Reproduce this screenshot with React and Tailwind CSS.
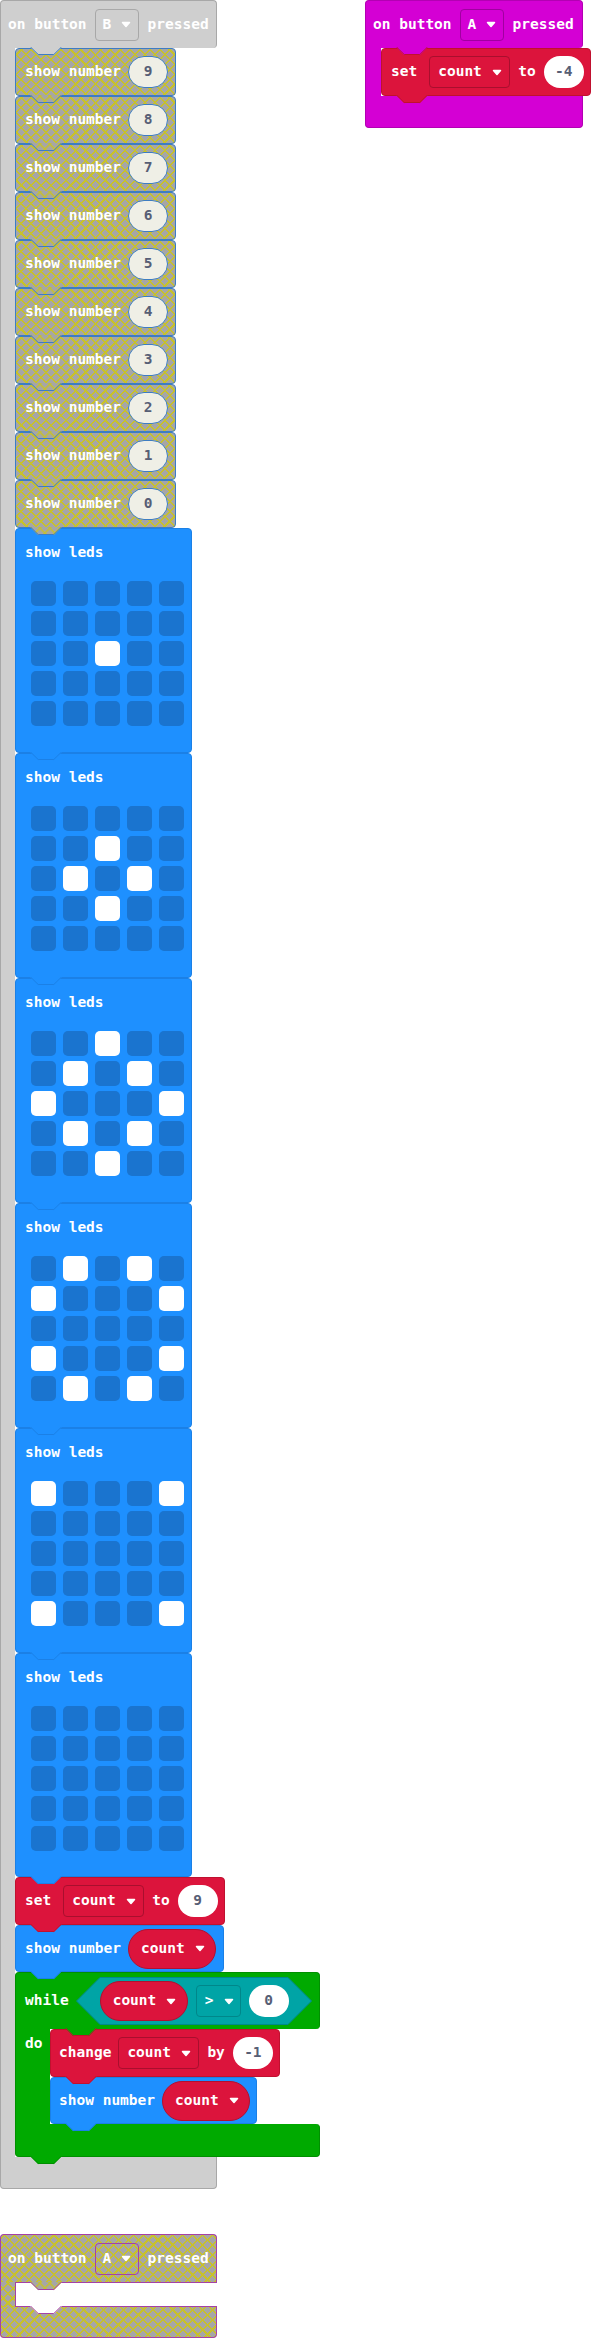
import React from "react";

const FONT = "font-['DejaVu_Sans_Mono',monospace]";
const HATCH =
  "bg-[#a6a6a6] bg-[image:repeating-linear-gradient(45deg,#c7c12c_0_1.5px,transparent_1.5px_7px),repeating-linear-gradient(-45deg,#c7c12c_0_1.5px,transparent_1.5px_7px)]";

const PATTERNS = [
  [12],
  [7, 11, 13, 17],
  [2, 6, 8, 10, 14, 16, 18, 22],
  [1, 3, 5, 9, 15, 19, 21, 23],
  [0, 4, 20, 24],
  [],
];

function Arrow() {
  return (
    <svg width="10" height="7" viewBox="0 0 10 7" className="shrink-0">
      <path d="M1.5 1.5 H8.5 L5 5.5 Z" fill="#fff" stroke="#fff" strokeWidth="1.5" strokeLinejoin="round" />
    </svg>
  );
}

function Tab({ fill, stroke, className = "" }) {
  return (
    <svg width="33" height="9" viewBox="0 0 33 9" className={`absolute z-10 pointer-events-none ${className}`}>
      <path d="M0 0 L8 8 L24 8 L32 0 Z" fill={fill} />
      <path d="M0.5 0 L8.2 7.5 L23.8 7.5 L31.5 0" fill="none" stroke={stroke} strokeWidth="1" />
    </svg>
  );
}

function WhiteOval({ children, className = "" }) {
  return (
    <div className={`w-[40px] h-[32px] shrink-0 rounded-full bg-white flex items-center justify-center text-[#575e75] ${className}`}>
      {children}
    </div>
  );
}

function VarDropdown({ className = "" }) {
  return (
    <div className={`w-[81px] h-[32px] shrink-0 rounded-[4px] border border-[#a90f2e] flex items-center pl-[8px] gap-[10px] ${className}`}>
      <span>count</span>
      <Arrow />
    </div>
  );
}

function CountPill({ className = "" }) {
  return (
    <div className={`w-[88px] h-[40px] shrink-0 rounded-full border border-[#b3102f] bg-[#dc143c] flex items-center pl-[12px] gap-[10px] ${className}`}>
      <span>count</span>
      <Arrow />
    </div>
  );
}

function ShowNumberHatched({ n }) {
  return (
    <div className={`relative w-[161px] h-[48px] shrink-0 rounded-[4px] border border-[#3d7dc3] flex items-center pl-[9px] ${HATCH}`}>
      <span>show number</span>
      <div className="ml-auto mr-[7px] w-[40px] h-[32px] rounded-full border border-[#3d7dc3] bg-[#efefe6] flex items-center justify-center text-[#575e75]">
        {n}
      </div>
      <Tab fill="url(#hatch)" stroke="#3d7dc3" className="left-[14px] top-full" />
    </div>
  );
}

function ShowLeds({ on, last }) {
  const cells = Array.from({ length: 25 }, (_, i) => on.includes(i));
  return (
    <div
      className={
        last
          ? "relative w-[177px] h-[224px] shrink-0 rounded-[4px] border border-[#1b80e6] bg-[#1e90ff]"
          : "relative w-[177px] h-[225px] shrink-0 rounded-[4px] border border-[#1b80e6] bg-[#1e90ff]"
      }
    >
      <div className="h-[48px] flex items-center pl-[9px]">show leds</div>
      <div className="ml-[15px] mt-[4px] grid grid-cols-[repeat(5,25px)] gap-x-[7px] gap-y-[5px]">
        {cells.map((v, i) => (
          <div
            key={i}
            className={v ? "h-[25px] rounded-[5px] bg-white" : "h-[25px] rounded-[5px] bg-[#1a74cf]"}
          />
        ))}
      </div>
      <Tab fill="#1e90ff" stroke="#1b80e6" className="left-[14px] top-full" />
    </div>
  );
}

function SetBlock({ value }) {
  return (
    <div className="relative w-[210px] h-[48px] shrink-0 rounded-[4px] border border-[#c0112f] bg-[#dc143c] flex items-center pl-[9px]">
      <span>set</span>
      <VarDropdown className="ml-[12px]" />
      <span className="ml-[8px]">to</span>
      <WhiteOval className="ml-[8px]">{value}</WhiteOval>
      <Tab fill="#dc143c" stroke="#c0112f" className="left-[14px] top-full" />
    </div>
  );
}

function ShowNumberCount({ inner }) {
  return (
    <div
      className={
        inner
          ? "relative w-[207px] h-[47px] shrink-0 rounded-[4px] border border-[#1b80e6] bg-[#1e90ff] flex items-center pl-[8px]"
          : "relative w-[209px] h-[47px] shrink-0 rounded-[4px] border border-[#1b80e6] bg-[#1e90ff] flex items-center pl-[9px]"
      }
    >
      <span>show number</span>
      <CountPill className="ml-[7px]" />
      <Tab fill="#1e90ff" stroke="#1b80e6" className="left-[14px] top-full" />
    </div>
  );
}

function ChangeBlock() {
  return (
    <div className="relative w-[230px] h-[48px] shrink-0 rounded-[4px] border border-[#c0112f] bg-[#dc143c] flex items-center pl-[8px]">
      <span>change</span>
      <VarDropdown className="ml-[7px] w-[80px]" />
      <span className="ml-[8px]">by</span>
      <WhiteOval className="ml-[8px] w-[39px]">-1</WhiteOval>
      <Tab fill="#dc143c" stroke="#c0112f" className="left-[14px] top-full" />
    </div>
  );
}

function Hexagon({ className = "" }) {
  return (
    <div className={`relative w-[236px] h-[48px] shrink-0 ${className}`}>
      <svg className="absolute inset-0" width="236" height="48" viewBox="0 0 236 48">
        <path d="M0.5 24 L24 0.5 H212 L235.5 24 L212 47.5 H24 Z" fill="#00a4a6" stroke="#00898b" strokeWidth="1" />
      </svg>
      <div className="relative h-full flex items-center pl-[24px]">
        <CountPill />
        <div className="ml-[8px] w-[45px] h-[32px] shrink-0 rounded-[4px] border border-[#00878a] bg-[#00a4a6] flex items-center pl-[8px] gap-[11px]">
          <span>&gt;</span>
          <Arrow />
        </div>
        <WhiteOval className="ml-[8px]">0</WhiteOval>
      </div>
    </div>
  );
}

function WhileBlock() {
  return (
    <div className="relative w-[305px] shrink-0">
      <div className="h-[57px] rounded-t-[4px] rounded-br-[4px] border border-b-0 border-[#009000] bg-[#00aa00] flex items-center pl-[9px]">
        <span>while</span>
        <Hexagon className="ml-[7px]" />
      </div>
      <div className="flex">
        <div className="w-[35px] shrink-0 bg-[#00aa00] border-l border-[#009000] pl-[9px] pt-[7px] leading-none">do</div>
        <div className="relative flex flex-col">
          <Tab fill="#00aa00" stroke="#c0112f" className="left-[15px] -top-px" />
          <ChangeBlock />
          <ShowNumberCount inner />
        </div>
      </div>
      <div className="h-[33px] rounded-b-[4px] rounded-tr-[4px] border border-t-0 border-[#009000] bg-[#00aa00]" />
      <Tab fill="#00aa00" stroke="#009000" className="left-[15px] top-[calc(100%-1px)]" />
    </div>
  );
}

function GreyHat() {
  return (
    <div className="absolute left-0 top-0">
      <div className="w-[217px] h-[48px] rounded-t-[4px] rounded-br-[4px] border border-b-0 border-[#a8a8a8] bg-[#cfcfcf] flex items-center pl-[7px]">
        <span>on button</span>
        <div className="ml-[8px] w-[44px] h-[32px] shrink-0 rounded-[4px] border border-[#a8a8a8] flex items-center pl-[7px] gap-[10px]">
          <span>B</span>
          <Arrow />
        </div>
        <span className="ml-[9px]">pressed</span>
      </div>
      <div className="flex">
        <div className="w-[15px] shrink-0 bg-[#cfcfcf] border-l border-[#a8a8a8]" />
        <div className="relative flex flex-col">
          <Tab fill="#cfcfcf" stroke="#3d7dc3" className="left-[15px] -top-px" />
          {[9, 8, 7, 6, 5, 4, 3, 2, 1, 0].map((n) => (
            <ShowNumberHatched key={n} n={n} />
          ))}
          {PATTERNS.map((p, i) => (
            <ShowLeds key={i} on={p} last={i === 5} />
          ))}
          <SetBlock value="9" />
          <ShowNumberCount />
          <WhileBlock />
        </div>
      </div>
      <div className="w-[217px] h-[32px] rounded-b-[4px] border border-t-0 border-[#a8a8a8] bg-[#cfcfcf]" />
    </div>
  );
}

function MagentaHat() {
  return (
    <div className="absolute left-[365px] top-0">
      <div className="w-[218px] h-[48px] rounded-t-[4px] rounded-br-[4px] border border-b-0 border-[#b300b3] bg-[#d400d4] flex items-center pl-[7px]">
        <span>on button</span>
        <div className="ml-[8px] w-[44px] h-[32px] shrink-0 rounded-[4px] border border-[#a000a0] flex items-center pl-[7px] gap-[10px]">
          <span>A</span>
          <Arrow />
        </div>
        <span className="ml-[9px]">pressed</span>
      </div>
      <div className="flex">
        <div className="w-[16px] shrink-0 bg-[#d400d4] border-l border-[#b300b3]" />
        <div className="relative flex flex-col">
          <Tab fill="#d400d4" stroke="#c0112f" className="left-[15px] -top-px" />
          <SetBlock value="-4" />
        </div>
      </div>
      <div className="w-[218px] h-[32px] rounded-b-[4px] border border-t-0 border-[#b300b3] bg-[#d400d4]" />
    </div>
  );
}

function BottomHat() {
  return (
    <div className="absolute left-0 top-[2234px] w-[217px]">
      <div className={`h-[48px] rounded-t-[4px] border border-b-0 border-[#a541a5] flex items-center pl-[7px] ${HATCH}`}>
        <span>on button</span>
        <div className="ml-[8px] w-[44px] h-[32px] shrink-0 rounded-[4px] border border-[#a541a5] flex items-center pl-[7px] gap-[10px]">
          <span>A</span>
          <Arrow />
        </div>
        <span className="ml-[9px]">pressed</span>
      </div>
      <div className="flex h-[25px]">
        <div className={`w-[15px] shrink-0 border-l border-[#a541a5] ${HATCH}`} />
        <div className="relative flex-1 bg-white border-l border-t border-b border-[#a541a5]">
          <Tab fill="url(#hatch)" stroke="#a541a5" className="left-[14px] -top-px" />
          <Tab fill="#ffffff" stroke="#a541a5" className="left-[14px] top-full" />
        </div>
      </div>
      <div className={`h-[31px] rounded-b-[4px] border border-t-0 border-[#a541a5] ${HATCH}`} />
    </div>
  );
}

export default function App() {
  return (
    <div className={`relative w-[591px] h-[2339px] overflow-hidden bg-white text-white text-[14.5px] font-bold ${FONT}`}>
      <svg width="0" height="0" className="absolute">
        <defs>
          <pattern id="hatch" width="7" height="7" patternUnits="userSpaceOnUse" patternTransform="rotate(45)">
            <rect width="7" height="7" fill="#a6a6a6" />
            <rect width="1.5" height="7" fill="#c7c12c" />
            <rect width="7" height="1.5" fill="#c7c12c" />
          </pattern>
        </defs>
      </svg>
      <GreyHat />
      <MagentaHat />
      <BottomHat />
    </div>
  );
}
